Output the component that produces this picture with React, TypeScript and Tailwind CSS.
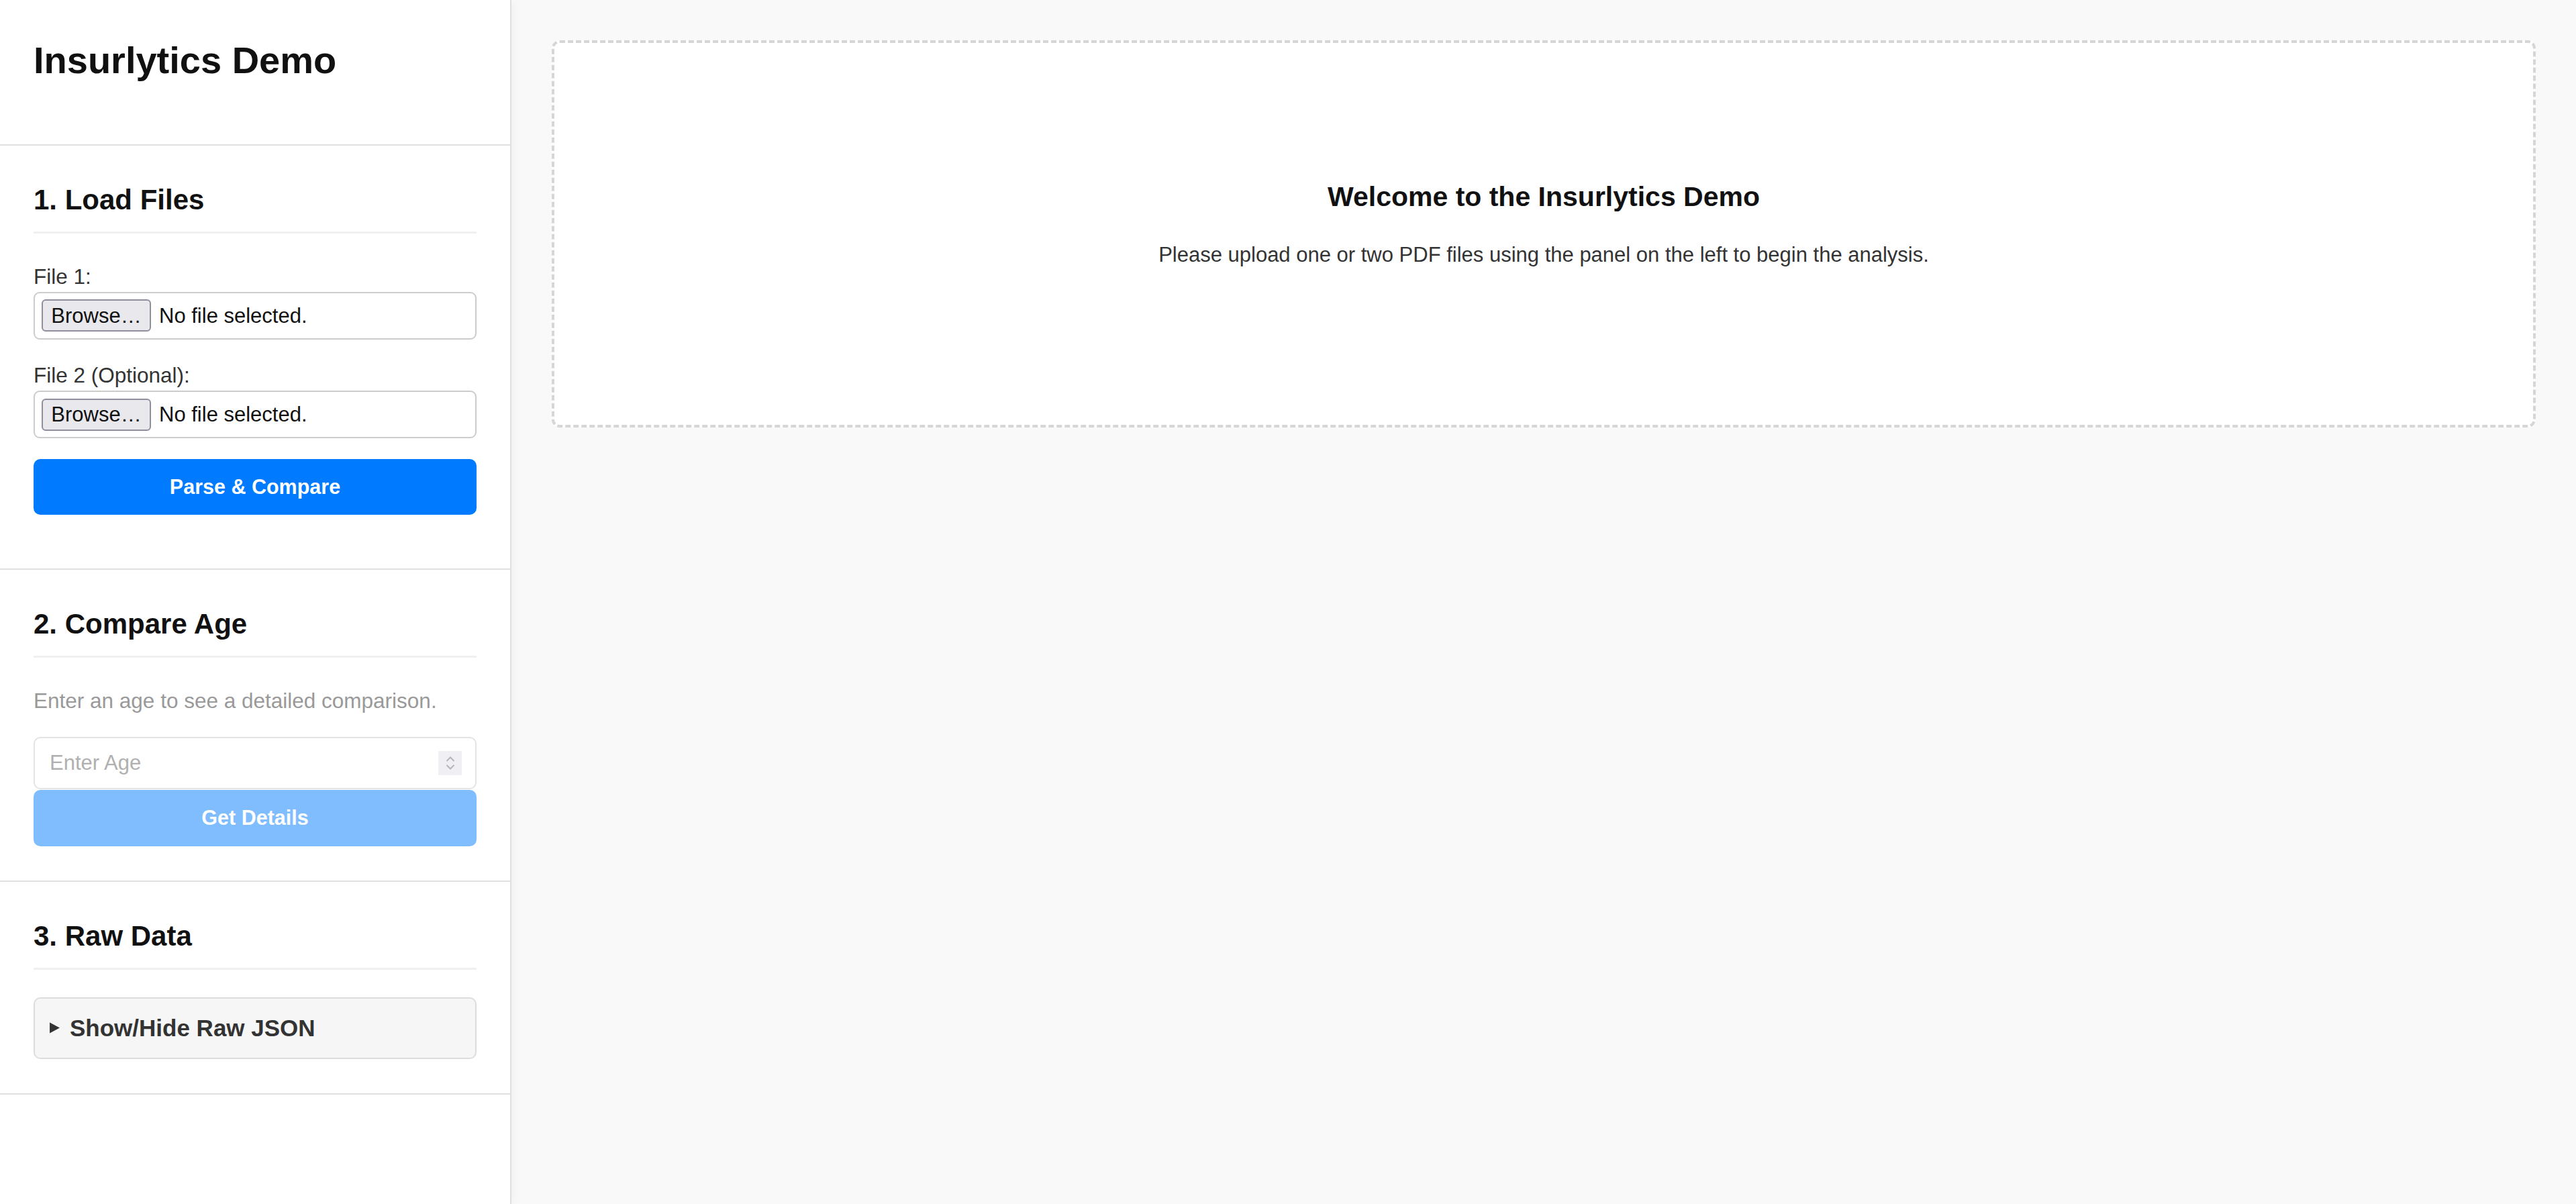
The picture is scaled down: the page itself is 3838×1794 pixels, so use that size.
import React from "react";

function FileField() {
  return (
    <div className="flex h-[71px] items-center gap-[12px] rounded-[9px] border-2 border-[#cccccc] bg-white px-[10px]">
      <span className="flex h-[48px] w-[163px] items-center justify-center rounded-[6px] border-2 border-[#8f8f9d] bg-[#e9e9ed] text-[31px] leading-none text-[#111]">
        Browse…
      </span>
      <span className="text-[31px] leading-none text-[#111]">No file selected.</span>
    </div>
  );
}

function SectionTitle({ children }: { children: React.ReactNode }) {
  return (
    <h2 className="border-b-[3px] border-[#f0f0f0] pb-[26px] text-[42px] font-bold leading-none text-[#111]">
      {children}
    </h2>
  );
}

export default function App() {
  return (
    <div className="flex h-screen w-full bg-[#f9f9f9] font-['Liberation_Sans',Arial,sans-serif]">
      {/* Sidebar */}
      <aside className="relative z-10 w-[762px] shrink-0 border-r-2 border-[#e0e0e0] bg-white shadow-[3px_0_14px_rgba(0,0,0,0.04)]">
        <div className="h-[217px] border-b-2 border-[#e0e0e0] px-[50px] pt-[62px]">
          <h1 className="text-[56px] font-bold leading-none text-[#111]">Insurlytics Demo</h1>
        </div>

        {/* 1. Load Files */}
        <section className="border-b-2 border-[#e0e0e0] px-[50px] pt-[60px] pb-[80px]">
          <SectionTitle>1. Load Files</SectionTitle>
          <label className="mt-[49px] block text-[31.5px] leading-none text-[#333]">File 1:</label>
          <div className="mt-[6px]">
            <FileField />
          </div>
          <label className="mt-[38px] block text-[31.5px] leading-none text-[#333]">File 2 (Optional):</label>
          <div className="mt-[7px]">
            <FileField />
          </div>
          <button className="mt-[31px] flex h-[83px] w-full items-center justify-center rounded-[10px] bg-[#007bff] text-[30.5px] font-bold leading-none text-white">
            Parse &amp; Compare
          </button>
        </section>

        {/* 2. Compare Age */}
        <section className="border-b-2 border-[#e0e0e0] px-[50px] pt-[60px] pb-[51px]">
          <SectionTitle>2. Compare Age</SectionTitle>
          <p className="mt-[49px] text-[31.5px] leading-none text-[#999]">
            Enter an age to see a detailed comparison.
          </p>
          <div className="mt-[37px] flex h-[78px] items-center justify-between rounded-[10px] border-2 border-[#e4e4e4] bg-white pr-[20px] pl-[22px]">
            <span className="text-[31px] leading-none text-[#b0b0b0]">Enter Age</span>
            <span className="flex h-[36px] w-[35px] flex-col items-center justify-center gap-[4px] bg-[#f0f0f4]">
              <svg width="14" height="8" viewBox="0 0 14 8" fill="none">
                <path d="M1.5 7 L7 1.5 L12.5 7" stroke="#b4b4bc" strokeWidth="2" />
              </svg>
              <svg width="14" height="8" viewBox="0 0 14 8" fill="none">
                <path d="M1.5 1 L7 6.5 L12.5 1" stroke="#b4b4bc" strokeWidth="2" />
              </svg>
            </span>
          </div>
          <button className="mt-[1px] flex h-[84px] w-full items-center justify-center rounded-[10px] bg-[#80bdff] text-[30.5px] font-bold leading-none text-white">
            Get Details
          </button>
        </section>

        {/* 3. Raw Data */}
        <section className="border-b-2 border-[#e0e0e0] px-[50px] pt-[60px] pb-[51px]">
          <SectionTitle>3. Raw Data</SectionTitle>
          <div className="mt-[41px] flex h-[92px] items-center gap-[14px] rounded-[10px] border-2 border-[#dddddd] bg-[#f6f6f6] pl-[21px]">
            <svg width="17" height="17" viewBox="0 0 16 16">
              <polygon points="1,0.5 15,8 1,15.5" fill="#333" />
            </svg>
            <span className="text-[35px] font-bold leading-none text-[#333]">Show/Hide Raw JSON</span>
          </div>
        </section>
      </aside>

      {/* Main */}
      <main className="flex-1 px-[60px] pt-[60px]">
        <div className="rounded-[12px] border-4 border-dashed border-[#d6d6d6] bg-white pt-[209px] pb-[238px] text-center">
          <h2 className="text-[41px] font-bold leading-none text-[#111]">Welcome to the Insurlytics Demo</h2>
          <p className="mt-[50px] text-[31px] leading-none text-[#333]">
            Please upload one or two PDF files using the panel on the left to begin the analysis.
          </p>
        </div>
      </main>
    </div>
  );
}
